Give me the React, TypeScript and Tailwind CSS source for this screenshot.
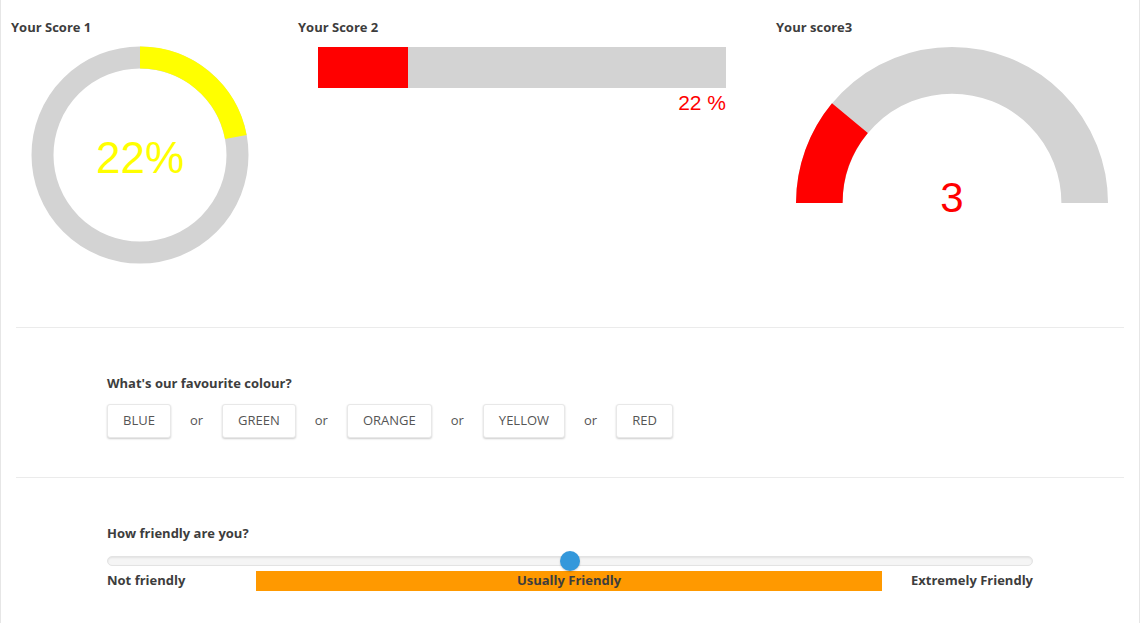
import React from "react";

const DONUT_R = 97.5;
const DONUT_C = 2 * Math.PI * DONUT_R;

function Donut({ value }: { value: number }) {
  const dash = (value / 100) * DONUT_C;
  return (
    <svg width="218" height="218" viewBox="0 0 218 218">
      <circle cx="109" cy="109" r={DONUT_R} fill="none" stroke="#d3d3d3" strokeWidth="22" />
      <circle
        cx="109"
        cy="109"
        r={DONUT_R}
        fill="none"
        stroke="#ffff00"
        strokeWidth="22"
        strokeDasharray={`${dash} ${DONUT_C}`}
        transform="rotate(-90 109 109)"
      />
      <text
        x="109"
        y="127"
        textAnchor="middle"
        fill="#ffff00"
        fontSize="44"
        fontFamily="'Liberation Sans', Arial, sans-serif"
      >
        {value}%
      </text>
    </svg>
  );
}

function arc(cx: number, cy: number, r: number, from: number, to: number) {
  // angles in degrees, 180 = left, 360 = right, going over the top
  const p = (a: number) => [cx + r * Math.cos((a * Math.PI) / 180), cy + r * Math.sin((a * Math.PI) / 180)];
  const [x1, y1] = p(from);
  const [x2, y2] = p(to);
  return `M ${x1} ${y1} A ${r} ${r} 0 0 1 ${x2} ${y2}`;
}

function Gauge({ value, max }: { value: number; max: number }) {
  const cx = 156;
  const cy = 156;
  const r = 132.7;
  const end = 180 + (value / max) * 180;
  return (
    <svg width="313" height="184" viewBox="0 0 313 184">
      <path d={arc(cx, cy, r, 180, 360)} fill="none" stroke="#d3d3d3" strokeWidth="46.6" />
      <path d={arc(cx, cy, r, 180, end)} fill="none" stroke="#ff0000" strokeWidth="46.6" />
      <text
        x={cx}
        y="165"
        textAnchor="middle"
        fill="#ff0000"
        fontSize="42"
        fontFamily="'Liberation Sans', Arial, sans-serif"
      >
        {value}
      </text>
    </svg>
  );
}

const colours = ["Blue", "Green", "Orange", "Yellow", "Red"];

export default function App() {
  const score2 = 22;
  const friendly = 50;

  return (
    <div className="min-h-[623px] border-x border-[#e6e6e6] bg-white font-['Open_Sans',sans-serif] text-[13px] text-[#3d3d3d]">
      {/* scores */}
      <div className="flex h-[327px] pt-[18px]">
        <div className="w-[297px] pl-[10px]">
          <h4 className="h-[18px] font-bold leading-[18px]">Your Score 1</h4>
          <div className="mt-[10px] ml-[20px]">
            <Donut value={22} />
          </div>
        </div>
        <div className="w-[478px]">
          <h4 className="h-[18px] font-bold leading-[18px]">Your Score 2</h4>
          <div className="mt-[11px] ml-[20px] w-[408px]">
            <div className="h-[41px] bg-[#d3d3d3]">
              <div className="h-full bg-[#ff0000]" style={{ width: `${score2}%` }} />
            </div>
            <div className="mt-[3px] text-right font-['Liberation_Sans',Arial,sans-serif] text-[21px] leading-[24px] text-[#ff0000]">
              {score2} %
            </div>
          </div>
        </div>
        <div className="flex-1">
          <h4 className="h-[18px] font-bold leading-[18px]">Your score3</h4>
          <div className="mt-[11px] ml-[20px]">
            <Gauge value={3} max={13.6} />
          </div>
        </div>
      </div>

      <div className="mx-[15px] border-t border-[#ebebeb]" />

      {/* favourite colour */}
      <div className="h-[149px] pl-[106px] pt-[46px]">
        <h4 className="h-[18px] font-bold leading-[18px]">What's our favourite colour?</h4>
        <div className="mt-[12px] flex items-center gap-[19px]">
          {colours.map((c, i) => (
            <React.Fragment key={c}>
              {i > 0 && <span className="text-[#555]">or</span>}
              <button
                type="button"
                className="h-[34px] rounded-[3px] border border-[#e8e8e8] bg-white px-[15px] uppercase text-[#555] shadow-[0_1px_2px_rgba(0,0,0,0.2)]"
              >
                {c}
              </button>
            </React.Fragment>
          ))}
        </div>
      </div>

      <div className="mx-[15px] border-t border-[#ebebeb]" />

      {/* friendliness */}
      <div className="pl-[106px] pt-[46px]">
        <h4 className="h-[18px] font-bold leading-[18px]">How friendly are you?</h4>
        <div className="w-[926px]">
          <div className="relative mt-[14px] h-[10px] rounded-full border border-[#e3e3e3] bg-[#f5f5f5] shadow-[inset_0_1px_2px_rgba(0,0,0,0.08)]">
            <div
              className="absolute top-1/2 h-[20px] w-[20px] -translate-x-1/2 -translate-y-1/2 rounded-full bg-[#3498db] shadow-[0_1px_2px_rgba(0,0,0,0.2)]"
              style={{ left: `${friendly}%` }}
            />
          </div>
          <div className="mt-[5px] grid h-[19px] grid-cols-[149px_1fr_151px] items-center font-bold">
            <span>Not friendly</span>
            <div className="flex h-full items-center justify-center bg-[#ff9900]">Usually Friendly</div>
            <span className="text-right">Extremely Friendly</span>
          </div>
        </div>
      </div>
    </div>
  );
}
